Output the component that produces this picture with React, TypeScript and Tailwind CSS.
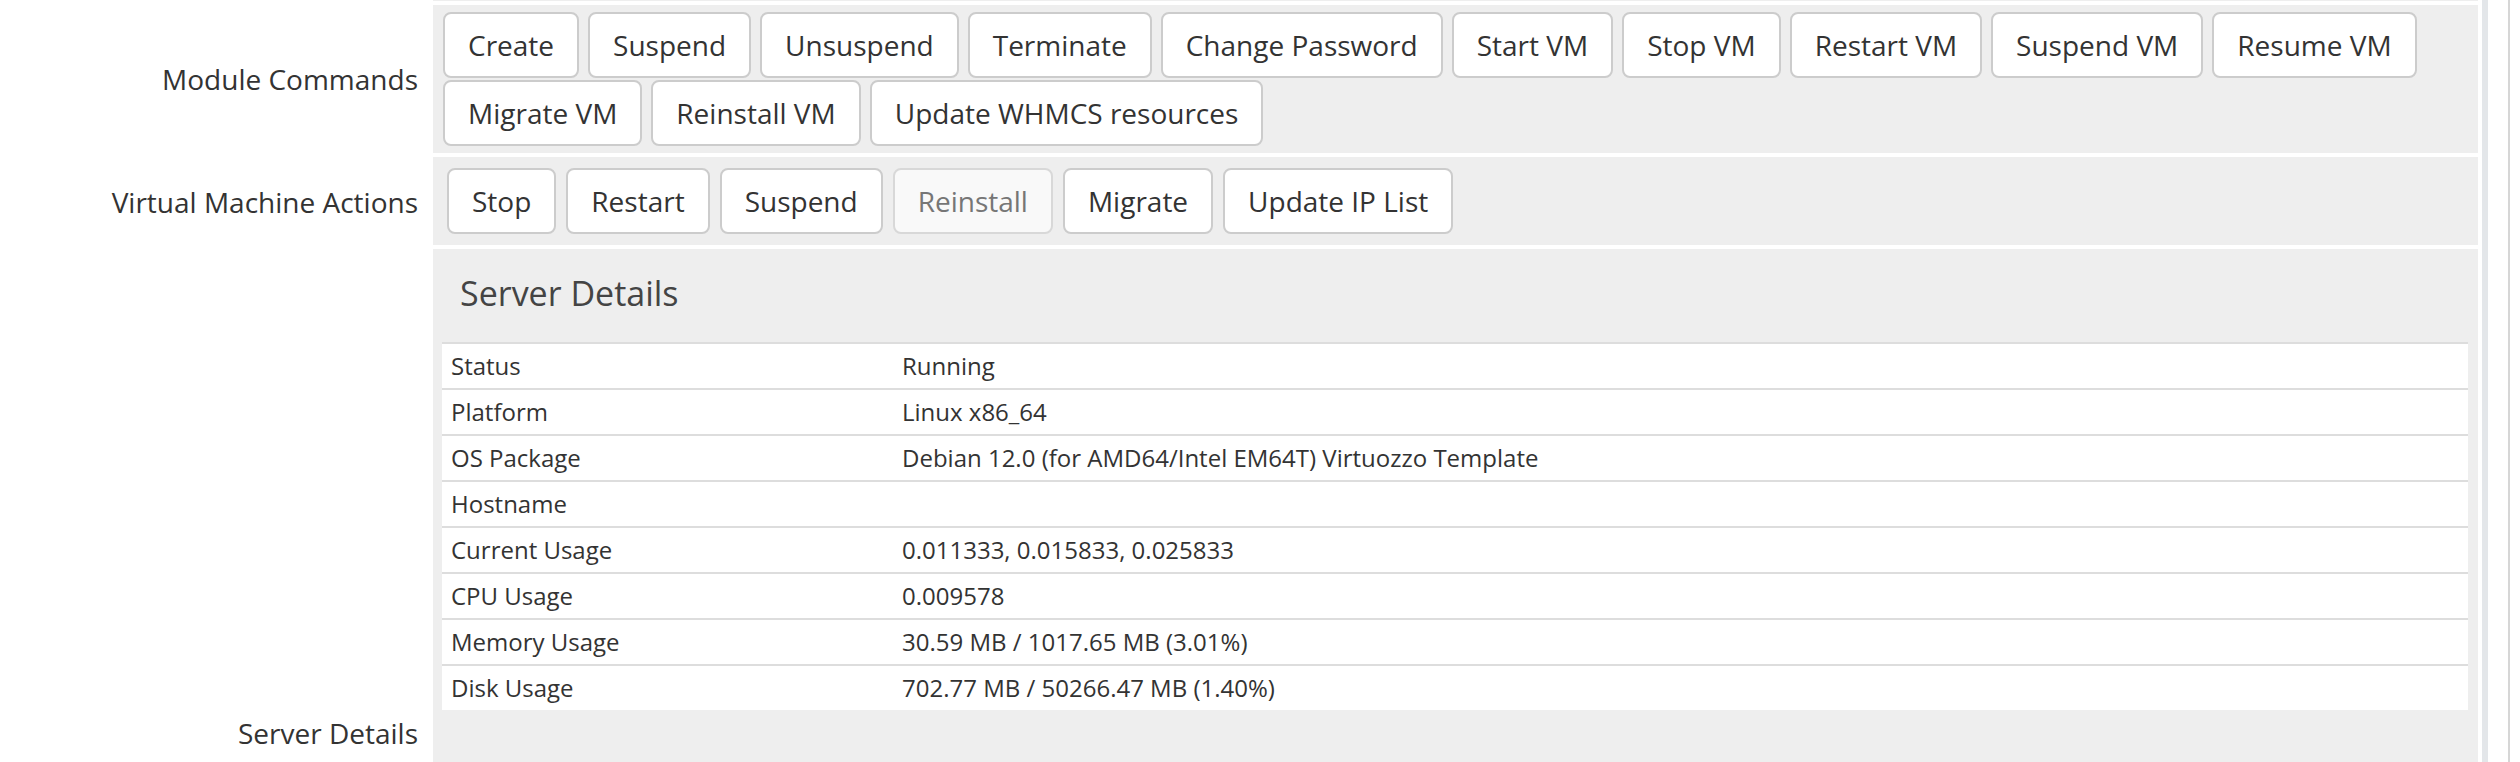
import type { ReactNode } from "react";

const moduleCommands = [
    ["Create", "Suspend", "Unsuspend", "Terminate", "Change Password", "Start VM", "Stop VM", "Restart VM", "Suspend VM", "Resume VM"],
    ["Migrate VM", "Reinstall VM", "Update WHMCS resources"],
];

const vmActions = [
    { label: "Stop" },
    { label: "Restart" },
    { label: "Suspend" },
    { label: "Reinstall", disabled: true },
    { label: "Migrate" },
    { label: "Update IP List" },
];

const details = [
    ["Status", "Running"],
    ["Platform", "Linux x86_64"],
    ["OS Package", "Debian 12.0 (for AMD64/Intel EM64T) Virtuozzo Template"],
    ["Hostname", ""],
    ["Current Usage", "0.011333, 0.015833, 0.025833"],
    ["CPU Usage", "0.009578"],
    ["Memory Usage", "30.59 MB / 1017.65 MB (3.01%)"],
    ["Disk Usage", "702.77 MB / 50266.47 MB (1.40%)"],
];

function Btn({ label, disabled }: { label: string; disabled?: boolean }) {
    return (
        <button
            type="button"
            disabled={disabled}
            className={`h-[66px] rounded-[8px] border-2 px-[23px] text-[28px] leading-[40px] whitespace-nowrap ${disabled
                ? "border-[#d8d8d8] bg-[#f9f9f9] text-[#767676]"
                : "border-[#cccccc] bg-white text-[#333]"
                }`}
        >
            {label}
        </button>
    );
}

function Row({ label, labelPad, className, children }: { label?: string; labelPad?: string; className?: string; children?: ReactNode }) {
    return (
        <div className={`flex ${className ?? ""}`}>
            <div className={`w-[433px] shrink-0 pr-[15px] text-right text-[28px] leading-[40px] text-[#333] ${labelPad ?? ""}`}>
                {label}
            </div>
            <div className="flex-1 bg-[#eeeeee]">{children}</div>
        </div>
    );
}

export default function App() {
    return (
        <div className="flex h-[762px] w-[2520px] overflow-hidden bg-white font-['Open_Sans','Noto_Sans',sans-serif] text-[#333]">
            <div className="flex w-[2478px] shrink-0 flex-col gap-[4px]">
                {/* tail of the row above */}
                <Row className="h-[1px]" />

                <Row label="Module Commands" labelPad="pt-[54px]">
                    <div className="flex flex-col gap-[2px] py-[7px] pl-[10px]">
                        {moduleCommands.map((line, i) => (
                            <div key={i} className="flex gap-[9px]">
                                {line.map((c) => (
                                    <Btn key={c} label={c} />
                                ))}
                            </div>
                        ))}
                    </div>
                </Row>

                <Row label="Virtual Machine Actions" labelPad="pt-[25px]">
                    <div className="flex gap-[10px] py-[11px] pl-[14px]">
                        {vmActions.map((a) => (
                            <Btn key={a.label} label={a.label} disabled={a.disabled} />
                        ))}
                    </div>
                </Row>

                <Row label="Server Details" labelPad="pt-[464px]" className="flex-1">
                    <div className="pt-[25px]">
                        <h3 className="pl-[27px] text-[34px] leading-[38px] text-[#444]">Server Details</h3>
                        <div className="mt-[30px] ml-[9px] mr-[10px] bg-white">
                            {details.map(([k, v]) => (
                                <div key={k} className="flex h-[46px] items-center border-t-2 border-[#dddddd] text-[24px] text-[#333]">
                                    <div className="w-[452px] shrink-0 pl-[9px]">{k}</div>
                                    <div className="pl-[8px]">{v}</div>
                                </div>
                            ))}
                        </div>
                    </div>
                </Row>
            </div>

            <div className="w-[4px] shrink-0" />
            <div className="w-[6px] shrink-0 bg-[#e3e6e9]" />
            <div className="w-[20px] shrink-0" />
            <div className="w-[2px] shrink-0 bg-[#d6d6d6]" />
        </div>
    );
}
